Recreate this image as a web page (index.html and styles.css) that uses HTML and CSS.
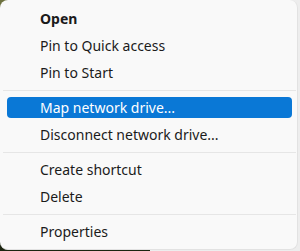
FILE: index.html
```html
<!DOCTYPE html>
<html lang="en">
<head>
    <meta charset="UTF-8">
    <meta name="viewport" content="width=device-width, initial-scale=1.0">
    <title>Context Menu</title>
    <link rel="stylesheet" href="styles.css">
</head>
<body>
    <div class="menu">
        <div class="menu-item bold"><span>Open</span></div>
        <div class="menu-item"><span>Pin to Quick access</span></div>
        <div class="menu-item"><span>Pin to Start</span></div>
        <div class="separator"></div>
        <div class="menu-item active"><span>Map network drive...</span></div>
        <div class="menu-item"><span>Disconnect network drive...</span></div>
        <div class="separator"></div>
        <div class="menu-item"><span>Create shortcut</span></div>
        <div class="menu-item"><span>Delete</span></div>
        <div class="separator"></div>
        <div class="menu-item"><span>Properties</span></div>
    </div>
</body>
</html>
```

FILE: styles.css
```css
html, body {
    margin: 0;
    height: 100%;
}

body {
    font-family: "Noto Sans", "Open Sans", sans-serif;
    font-size: 14px;
    color: #1b1b1b;
    background:
        linear-gradient(to bottom, #6e7240, #1b2410) left / 50% 100% no-repeat,
        #ededed;
}

.menu {
    box-sizing: border-box;
    width: 298px;
    height: 250px;
    padding: 5px 0 4px;
    background-color: #f9f9f9;
    border: 1px solid #e2e2e2;
    border-left: none;
    border-top: none;
    border-radius: 8px;
    display: flex;
    flex-direction: column;
}

.menu-item {
    height: 27px;
    padding: 3px 5px 3px 7px;
    box-sizing: border-box;
    display: flex;
}

.menu-item span {
    flex: 1;
    display: flex;
    align-items: center;
    padding-left: 33px;
    border-radius: 4px;
    line-height: 1;
}

.menu-item.bold span {
    font-weight: bold;
}

.menu-item.active span {
    background-color: #0a78d6;
    color: #ffffff;
}

.separator {
    height: 1px;
    background-color: #e6e6e6;
    margin: 4px 1px 3px 3px;
}
```
